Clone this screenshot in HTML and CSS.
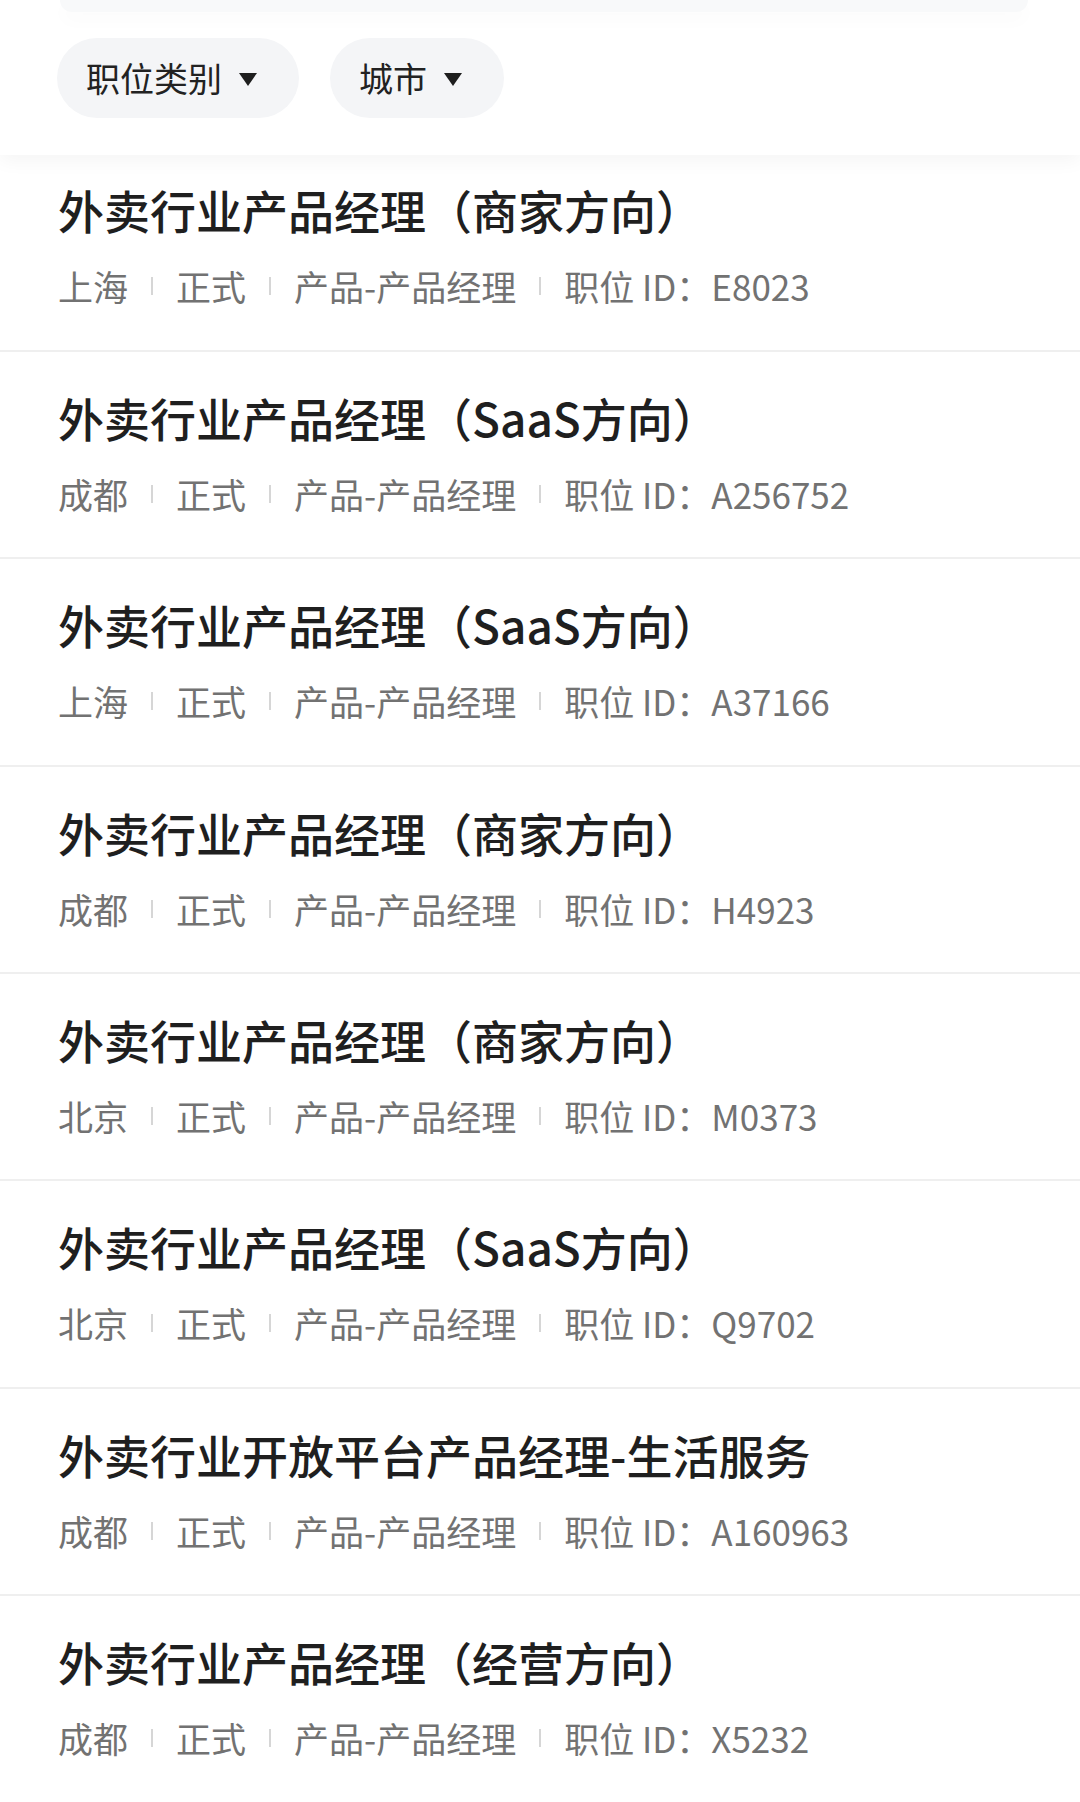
FILE: index.html
```html
<!DOCTYPE html>
<html lang="zh-CN">
<head>
<meta charset="utf-8">
<title>职位列表</title>
<link rel="stylesheet" href="styles.css">
</head>
<body>
<header class="header">
  <div class="search-tail"></div>
  <div class="filters">
    <button class="pill">职位类别<span class="caret"></span></button>
    <button class="pill">城市<span class="caret"></span></button>
  </div>
</header>
<ul class="jobs">
  <li class="job">
    <div class="job-title">外卖行业产品经理（商家方向）</div>
    <div class="job-meta"><span>上海</span><i class="sep"></i><span>正式</span><i class="sep"></i><span>产品-产品经理</span><i class="sep"></i><span>职位 ID：E8023</span></div>
  </li>
  <li class="job">
    <div class="job-title">外卖行业产品经理（SaaS方向）</div>
    <div class="job-meta"><span>成都</span><i class="sep"></i><span>正式</span><i class="sep"></i><span>产品-产品经理</span><i class="sep"></i><span>职位 ID：A256752</span></div>
  </li>
  <li class="job">
    <div class="job-title">外卖行业产品经理（SaaS方向）</div>
    <div class="job-meta"><span>上海</span><i class="sep"></i><span>正式</span><i class="sep"></i><span>产品-产品经理</span><i class="sep"></i><span>职位 ID：A37166</span></div>
  </li>
  <li class="job">
    <div class="job-title">外卖行业产品经理（商家方向）</div>
    <div class="job-meta"><span>成都</span><i class="sep"></i><span>正式</span><i class="sep"></i><span>产品-产品经理</span><i class="sep"></i><span>职位 ID：H4923</span></div>
  </li>
  <li class="job">
    <div class="job-title">外卖行业产品经理（商家方向）</div>
    <div class="job-meta"><span>北京</span><i class="sep"></i><span>正式</span><i class="sep"></i><span>产品-产品经理</span><i class="sep"></i><span>职位 ID：M0373</span></div>
  </li>
  <li class="job">
    <div class="job-title">外卖行业产品经理（SaaS方向）</div>
    <div class="job-meta"><span>北京</span><i class="sep"></i><span>正式</span><i class="sep"></i><span>产品-产品经理</span><i class="sep"></i><span>职位 ID：Q9702</span></div>
  </li>
  <li class="job">
    <div class="job-title">外卖行业开放平台产品经理-生活服务</div>
    <div class="job-meta"><span>成都</span><i class="sep"></i><span>正式</span><i class="sep"></i><span>产品-产品经理</span><i class="sep"></i><span>职位 ID：A160963</span></div>
  </li>
  <li class="job">
    <div class="job-title">外卖行业产品经理（经营方向）</div>
    <div class="job-meta"><span>成都</span><i class="sep"></i><span>正式</span><i class="sep"></i><span>产品-产品经理</span><i class="sep"></i><span>职位 ID：X5232</span></div>
  </li>
</ul>
</body>
</html>
```

FILE: styles.css
```css
* { box-sizing: border-box; }
html, body {
  margin: 0;
  padding: 0;
  background: #ffffff;
  font-family: "Noto Sans CJK SC", "Noto Sans", sans-serif;
  overflow: hidden;
}
.header {
  position: relative;
  z-index: 2;
  height: 155px;
  margin-bottom: -10.6px;
  background: #ffffff;
  box-shadow: 0 6px 18px rgba(0, 0, 0, 0.045);
}
.search-tail {
  height: 12px;
  margin: 0 52px 0 60px;
  background: #f8f9fa;
  border-radius: 0 0 30px 30px;
  box-shadow: 0 8px 18px rgba(0, 0, 0, 0.025);
}
.filters {
  display: flex;
  gap: 31px;
  padding: 26px 0 0 57px;
}
.pill {
  display: flex;
  align-items: center;
  gap: 17px;
  height: 80px;
  padding: 0 42px 0 29px;
  border: 0;
  border-radius: 40px;
  background: #f4f5f7;
  color: #222222;
  font-family: inherit;
  font-size: 34px;
  line-height: 1;
}
.caret {
  width: 0;
  height: 0;
  border-left: 9px solid transparent;
  border-right: 9px solid transparent;
  border-top: 13px solid #1e1e1e;
  margin-top: 2px;
}
.jobs {
  list-style: none;
  margin: 0;
  padding: 0;
}
.job {
  padding: 35px 0 41.4px 58px;
  border-bottom: 2px solid #efefef;
  display: flex;
  flex-direction: column;
  gap: 25px;
}
.job-title {
  font-size: 46px;
  line-height: 60px;
  font-weight: 500;
  color: #1f1f1f;
  white-space: nowrap;
}
.job-meta {
  display: flex;
  align-items: center;
  font-size: 35px;
  line-height: 44px;
  color: #727272;
  white-space: nowrap;
}
.sep {
  display: block;
  width: 2px;
  height: 18px;
  margin: 0 23px;
  background: #d6d6d6;
}
```
